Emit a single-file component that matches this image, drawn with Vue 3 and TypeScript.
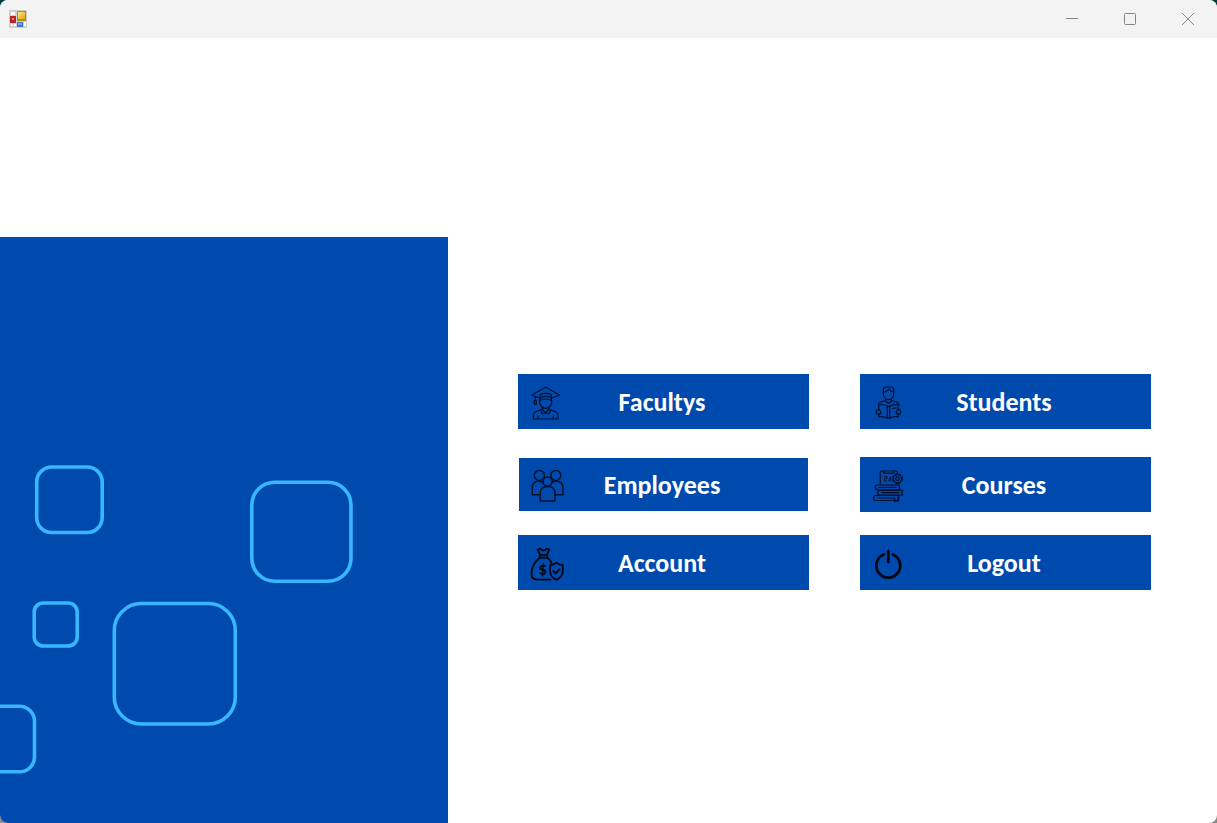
<script setup lang="ts">
type IconName = 'faculty' | 'student' | 'employees' | 'courses' | 'account' | 'logout'

interface MenuEntry {
  label: string
  icon: IconName
  inset?: boolean
}

const entries: MenuEntry[] = [
  { label: 'Facultys', icon: 'faculty' },
  { label: 'Students', icon: 'student' },
  { label: 'Employees', icon: 'employees', inset: true },
  { label: 'Courses', icon: 'courses' },
  { label: 'Account', icon: 'account' },
  { label: 'Logout', icon: 'logout' },
]
</script>

<template>
  <div class="window">
    <header class="titlebar">
      <svg class="app-icon" width="18" height="18" viewBox="0 0 18 18" aria-hidden="true">
        <defs>
          <linearGradient id="gold" x1="0" y1="0" x2="1" y2="1">
            <stop offset="0" stop-color="#ffe88a" />
            <stop offset="1" stop-color="#e0a800" />
          </linearGradient>
        </defs>
        <rect width="18" height="18" rx="1" fill="#cfcfcf" />
        <rect x="2" y="2" width="4" height="3" fill="#fff" />
        <rect x="1" y="6" width="6" height="7" fill="#b3241c" />
        <rect x="3" y="8" width="2" height="2" fill="#f08a7c" />
        <rect x="2" y="14" width="2" height="2" fill="#fff" />
        <rect x="5" y="14" width="2" height="2" fill="#fff" />
        <rect x="8" y="1" width="9" height="10" fill="#b98a10" />
        <rect x="9" y="2" width="7" height="7" fill="url(#gold)" />
        <rect x="8" y="12" width="6" height="5" fill="#3b6fd0" />
        <rect x="9" y="13" width="4" height="2" fill="#78a5f0" />
        <rect x="15" y="12" width="2" height="4" fill="#fff" />
      </svg>
      <div class="controls">
        <button type="button" aria-label="Minimize">
          <svg width="14" height="14" viewBox="0 0 14 14"><path d="M1 6.5H13" /></svg>
        </button>
        <button type="button" aria-label="Maximize">
          <svg width="14" height="14" viewBox="0 0 14 14"><rect x="1.5" y="1.5" width="11" height="11" rx="1" /></svg>
        </button>
        <button type="button" aria-label="Close">
          <svg width="14" height="14" viewBox="0 0 14 14"><path d="M1 1L13 13M13 1L1 13" /></svg>
        </button>
      </div>
    </header>

    <main class="content">
      <aside class="panel">
        <svg class="squares" width="448" height="586" viewBox="0 0 448 586" aria-hidden="true">
          <rect x="36.7" y="230" width="65.5" height="65.5" rx="15" />
          <rect x="251.8" y="245.3" width="99.2" height="99" rx="23" />
          <rect x="34.2" y="366" width="43" height="43" rx="9" />
          <rect x="114.3" y="366.5" width="121" height="120.5" rx="27" />
          <rect x="-31" y="469.3" width="65.5" height="65.5" rx="15" />
        </svg>
      </aside>

      <nav class="menu" aria-label="Main menu">
        <button
          v-for="entry in entries"
          :key="entry.label"
          type="button"
          class="tile"
          :class="{ inset: entry.inset }"
        >
          <svg class="icon" :class="entry.icon" width="36" height="37" viewBox="0 0 36 37" aria-hidden="true">
            <g v-if="entry.icon === 'faculty'">
              <path d="M12 15.2L3.8 12L17.7 4.3L31.6 12L23.4 15.2" />
              <path d="M12 17.5V11.8Q17.7 9 23.4 11.8V17.5Q17.7 14.5 12 17.5Z" />
              <path d="M12 14.6Q17.7 12 23.4 14.6" />
              <path d="M7.3 13.5V17.5M6.3 17.5H8.3V21.3H6.3Z" />
              <path d="M12 17.5Q11 18.5 12 20.5Q13.5 25.3 17.7 25.3Q21.9 25.3 23.4 20.5Q24.4 18.5 23.4 17.5" />
              <path d="M14.5 24.5V26.3L17.7 30L20.9 26.3V24.5" />
              <path d="M14.5 26L12.6 27L14.3 31L17.7 29.5L21.1 31L22.8 27L20.9 26" />
              <path d="M12.6 27L8.6 28.4Q5.3 29.5 5.3 33V36H30V33Q30 29.5 26.8 28.4L22.8 27" />
              <path d="M10 33V36M25.3 33V36" />
            </g>
            <g v-else-if="entry.icon === 'student'">
              <path d="M13.3 10.5V7Q13.3 4 16.5 4H21Q23.7 4 23.7 7V11Q23.2 16.6 18.5 16.6Q13.8 16.6 13.3 10.5Z" />
              <path d="M13.3 9.5Q18 8 19.5 6.2Q21 8.8 23.7 9" />
              <path d="M15.8 16V18.2L18.4 20.5L21.2 18.2V16" />
              <path d="M15.5 17.5L10.5 19Q8.3 19.8 8.3 22.2M21.4 17.5L26.4 19Q28.8 19.8 28.8 22.2" />
              <path d="M8.8 27V22Q14 21 17.3 23.3V35.2Q14 33 8.8 33.8V31M28.2 27V22Q23 21 19.7 23.3V35.2Q23 33 28.2 33.8V31" />
              <path d="M17.3 35.2H19.7M17.3 23.3H19.7M22.5 25.5L26 24.8" />
              <path d="M8.8 26.5Q6 26.5 6.3 29Q6.6 31.5 8.8 31.3Q11.3 30.5 10.8 28.8Q10 27 8.8 26.5ZM28.2 26.5Q31 26.5 30.7 29Q30.4 31.5 28.2 31.3Q25.7 30.5 26.2 28.8Q27 27 28.2 26.5Z" />
            </g>
            <g v-else-if="entry.icon === 'employees'">
              <circle cx="10.4" cy="9.4" r="5" />
              <circle cx="26.8" cy="9.4" r="5" />
              <circle cx="18.6" cy="15.5" r="4.6" />
              <path d="M11.2 28.7H3.3V22Q3.3 15.2 10 15.2Q12.5 15.2 14 16.5M26 28.7H34V22Q34 15.2 27.2 15.2Q24.8 15.2 23.2 16.5" />
              <path d="M11.2 35V27.5Q11.2 20.6 18.6 20.6Q26 20.6 26 27.5V35Z" />
            </g>
            <g v-else-if="entry.icon === 'account'">
              <path d="M12.3 11L9.7 5.8Q12.3 4 14 6Q15.5 7 17 6Q19 4 21.3 5.8L18.8 11" />
              <path d="M11.8 11H19.3V13.7H11.8Z" />
              <path d="M11.8 13.7Q3.5 20.5 3.5 29.5Q3.5 35.6 9 35.6H22.5M19.3 13.7Q22 16 23.6 18.7" />
              <path d="M28.4 18.8Q31 21 34.8 21.2V27Q34.5 33 28.4 35.8Q22.3 33 22 27V21.2Q25.8 21 28.4 18.8Z" />
              <path d="M25.3 27.2L27.6 29.5L31.5 25.2" />
              <text x="14.8" y="31" text-anchor="middle">$</text>
            </g>
            <g v-else-if="entry.icon === 'courses'">
              <path d="M10.2 19V6Q10.2 5 11.2 5H26Q27.5 5 27.5 7.5M27.3 18V19" />
              <path d="M13.3 5V7.2H24V5" />
              <path class="fine" d="M14.3 10.5H17V12.5H14.5V15H16.5M18.5 15L20.8 10.5V15" />
              <circle cx="27.5" cy="12.7" r="4" />
              <circle class="teeth" cx="27.5" cy="12.7" r="4.9" />
              <circle cx="27.5" cy="12.7" r="1.8" />
              <path d="M29.8 19H8Q5.3 19 5.3 21.4Q5.3 23.8 8 23.8H29.8M29.8 19Q28.3 21.4 29.8 23.8M9 21.4H26" />
              <path d="M32.8 24.3H10Q7.5 24.3 7.5 26.6Q7.5 29 10 29H32.8M32.8 24.3Q31 26.6 32.8 29M11.5 26.6H29" />
              <path d="M29.2 29.5H6Q3.5 29.5 3.5 32Q3.5 34.5 6 34.5H24.5M29.2 29.5Q27.5 32 29.2 34.5H27M7.5 32H24M24.8 32.2V35.5L26.3 34.5L27.7 35.5V32.2" />
            </g>
            <g v-else>
              <path d="M13.8 10.5A12 12 0 1 0 22.8 10.5" />
              <path d="M18.3 7V18" />
            </g>
          </svg>
          <span class="label">{{ entry.label }}</span>
        </button>
      </nav>
    </main>
  </div>
</template>

<style>
body {
  margin: 0;
  background: linear-gradient(#063f40 50%, #8a8a88 50%);
}
</style>

<style scoped>
.window {
  display: flex;
  flex-direction: column;
  min-height: 100vh;
  overflow: hidden;
  border-radius: 8px;
  background: #fff;
  font-family: Carlito, Lato, "Open Sans", sans-serif;
}

.titlebar {
  display: flex;
  align-items: center;
  justify-content: space-between;
  height: 38px;
  padding-left: 9px;
  background: #f3f3f3;
}

.controls {
  display: flex;
  height: 100%;
}

.controls button {
  display: flex;
  align-items: center;
  justify-content: center;
  width: 58px;
  padding: 0;
  border: 0;
  background: transparent;
}

.controls svg {
  fill: none;
  stroke: #858585;
  stroke-width: 1;
}

.content {
  display: flex;
  flex: 1;
}

.panel {
  flex: 0 1 448px;
  min-height: 586px;
  margin-top: 199px;
  overflow: hidden;
  background: #004aad;
}

.squares {
  display: block;
  fill: none;
  stroke: #38b6ff;
  stroke-width: 3.6;
}

.menu {
  display: grid;
  flex: 1;
  grid-template-columns: 1fr 1fr;
  grid-template-rows: 60px 55px 55px;
  gap: 23px 51px;
  align-content: start;
  align-items: start;
  padding: 336px 66px 0 70px;
}

.tile {
  display: flex;
  align-items: center;
  height: 55px;
  padding: 0 49px 0 10px;
  border: 0;
  background: #004aad;
  color: #fff;
  font-family: inherit;
}

.tile.inset {
  height: 53px;
  margin: 1px;
}

.label {
  flex: 1;
  font-size: 26px;
  font-weight: 700;
  line-height: 30px;
  text-align: center;
}

.icon {
  flex: none;
  fill: none;
  stroke: #00102e;
  stroke-width: 1.2;
  stroke-linecap: round;
  stroke-linejoin: round;
}

.icon.employees {
  stroke-width: 1.5;
}

.icon.account {
  stroke: #000814;
  stroke-width: 1.9;
}

.icon.account text {
  fill: #000814;
  stroke: none;
  font-size: 18px;
  font-weight: 700;
}

.icon.courses {
  stroke-width: 1.2;
}

.fine {
  stroke-width: 1;
}

.teeth {
  stroke-dasharray: 2 2;
}

.icon.logout {
  stroke: #000510;
  stroke-width: 2.8;
}
</style>
